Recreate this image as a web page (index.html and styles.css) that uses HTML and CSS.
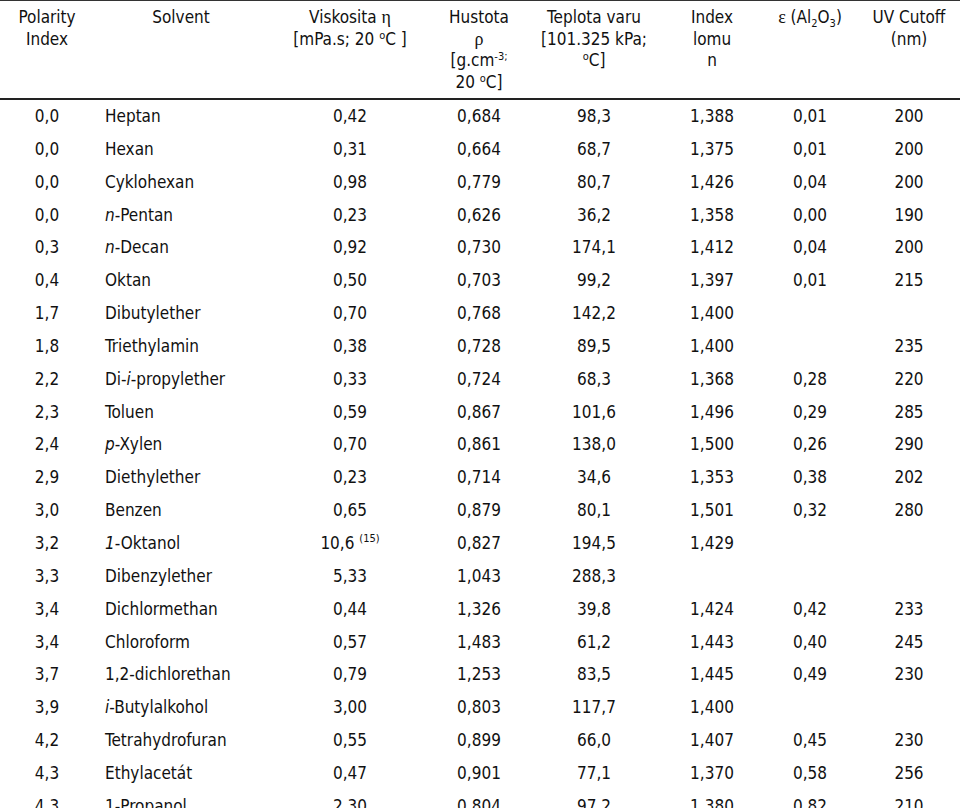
FILE: index.html
```html
<!DOCTYPE html>
<html lang="cs">
<head>
<meta charset="utf-8">
<title>Solventy</title>
<link rel="stylesheet" href="styles.css">
</head>
<body>
<table class="solv">
  <colgroup>
    <col class="c1"><col class="c2"><col class="c3"><col class="c4"><col class="c5"><col class="c6"><col class="c7"><col class="c8">
  </colgroup>
  <thead>
    <tr>
      <th>Polarity<br>Index</th>
      <th>Solvent</th>
      <th>Viskosita <span class="gr">η</span><br>[mPa.s; 20 <sup>o</sup>C ]</th>
      <th>Hustota<br><span class="gr">ρ</span><br>[g.cm<sup>-3;</sup><br>20 <sup>o</sup>C]</th>
      <th>Teplota varu<br>[101.325 kPa;<br><sup>o</sup>C]</th>
      <th>Index<br>lomu<br>n</th>
      <th><span class="gr">ε</span> (Al<sub>2</sub>O<sub>3</sub>)</th>
      <th>UV Cutoff<br>(nm)</th>
    </tr>
  </thead>
  <tbody>
    <tr><td>0,0</td><td class="name">Heptan</td><td>0,42</td><td>0,684</td><td>98,3</td><td>1,388</td><td>0,01</td><td>200</td></tr>
    <tr><td>0,0</td><td class="name">Hexan</td><td>0,31</td><td>0,664</td><td>68,7</td><td>1,375</td><td>0,01</td><td>200</td></tr>
    <tr><td>0,0</td><td class="name">Cyklohexan</td><td>0,98</td><td>0,779</td><td>80,7</td><td>1,426</td><td>0,04</td><td>200</td></tr>
    <tr><td>0,0</td><td class="name"><i>n</i>-Pentan</td><td>0,23</td><td>0,626</td><td>36,2</td><td>1,358</td><td>0,00</td><td>190</td></tr>
    <tr><td>0,3</td><td class="name"><i>n</i>-Decan</td><td>0,92</td><td>0,730</td><td>174,1</td><td>1,412</td><td>0,04</td><td>200</td></tr>
    <tr><td>0,4</td><td class="name">Oktan</td><td>0,50</td><td>0,703</td><td>99,2</td><td>1,397</td><td>0,01</td><td>215</td></tr>
    <tr><td>1,7</td><td class="name">Dibutylether</td><td>0,70</td><td>0,768</td><td>142,2</td><td>1,400</td><td></td><td></td></tr>
    <tr><td>1,8</td><td class="name">Triethylamin</td><td>0,38</td><td>0,728</td><td>89,5</td><td>1,400</td><td></td><td>235</td></tr>
    <tr><td>2,2</td><td class="name">Di-<i>i</i>-propylether</td><td>0,33</td><td>0,724</td><td>68,3</td><td>1,368</td><td>0,28</td><td>220</td></tr>
    <tr><td>2,3</td><td class="name">Toluen</td><td>0,59</td><td>0,867</td><td>101,6</td><td>1,496</td><td>0,29</td><td>285</td></tr>
    <tr><td>2,4</td><td class="name"><i>p</i>-Xylen</td><td>0,70</td><td>0,861</td><td>138,0</td><td>1,500</td><td>0,26</td><td>290</td></tr>
    <tr><td>2,9</td><td class="name">Diethylether</td><td>0,23</td><td>0,714</td><td>34,6</td><td>1,353</td><td>0,38</td><td>202</td></tr>
    <tr><td>3,0</td><td class="name">Benzen</td><td>0,65</td><td>0,879</td><td>80,1</td><td>1,501</td><td>0,32</td><td>280</td></tr>
    <tr><td>3,2</td><td class="name"><i>1</i>-Oktanol</td><td>10,6 <sup class="note">(15)</sup></td><td>0,827</td><td>194,5</td><td>1,429</td><td></td><td></td></tr>
    <tr><td>3,3</td><td class="name">Dibenzylether</td><td>5,33</td><td>1,043</td><td>288,3</td><td></td><td></td><td></td></tr>
    <tr><td>3,4</td><td class="name">Dichlormethan</td><td>0,44</td><td>1,326</td><td>39,8</td><td>1,424</td><td>0,42</td><td>233</td></tr>
    <tr><td>3,4</td><td class="name">Chloroform</td><td>0,57</td><td>1,483</td><td>61,2</td><td>1,443</td><td>0,40</td><td>245</td></tr>
    <tr><td>3,7</td><td class="name">1,2-dichlorethan</td><td>0,79</td><td>1,253</td><td>83,5</td><td>1,445</td><td>0,49</td><td>230</td></tr>
    <tr><td>3,9</td><td class="name"><i>i</i>-Butylalkohol</td><td>3,00</td><td>0,803</td><td>117,7</td><td>1,400</td><td></td><td></td></tr>
    <tr><td>4,2</td><td class="name">Tetrahydrofuran</td><td>0,55</td><td>0,899</td><td>66,0</td><td>1,407</td><td>0,45</td><td>230</td></tr>
    <tr><td>4,3</td><td class="name">Ethylacetát</td><td>0,47</td><td>0,901</td><td>77,1</td><td>1,370</td><td>0,58</td><td>256</td></tr>
    <tr><td>4,3</td><td class="name">1-Propanol</td><td>2,30</td><td>0,804</td><td>97,2</td><td>1,380</td><td>0,82</td><td>210</td></tr>
  </tbody>
</table>
</body>
</html>
```

FILE: styles.css
```css
html, body {
  margin: 0;
  padding: 0;
  background: #fff;
}

.solv {
  border-collapse: collapse;
  table-layout: fixed;
  width: 960px;
  font-family: "DejaVu Sans Condensed", "DejaVu Sans", sans-serif;
  font-stretch: condensed;
  font-size: 17px;
  color: #111;
}

.c1 { width: 94px; }
.c2 { width: 174px; }
.c3 { width: 164px; }
.c4 { width: 94px; }
.c5 { width: 136px; }
.c6 { width: 100px; }
.c7 { width: 96px; }
.c8 { width: 102px; }

.solv thead tr {
  border-top: 1px solid #333;
  border-bottom: 2px solid #222;
}

.solv th {
  font-weight: normal;
  vertical-align: top;
  text-align: center;
  line-height: 21.5px;
  padding: 6px 0 4.6px;
  height: 86px;
  white-space: nowrap;
}

.solv td {
  height: 32.85px;
  padding: 0;
  text-align: center;
  vertical-align: middle;
  white-space: nowrap;
}

.solv td.name {
  text-align: left;
  padding-left: 11px;
}

.gr {
  font-family: "Liberation Serif", serif;
  font-size: 18px;
}

sup, sub {
  font-size: 11px;
  line-height: 0;
}

sup { vertical-align: 6px; }
sub { vertical-align: -4px; }

.note {
  font-size: 11px;
  vertical-align: 7px;
}
```
